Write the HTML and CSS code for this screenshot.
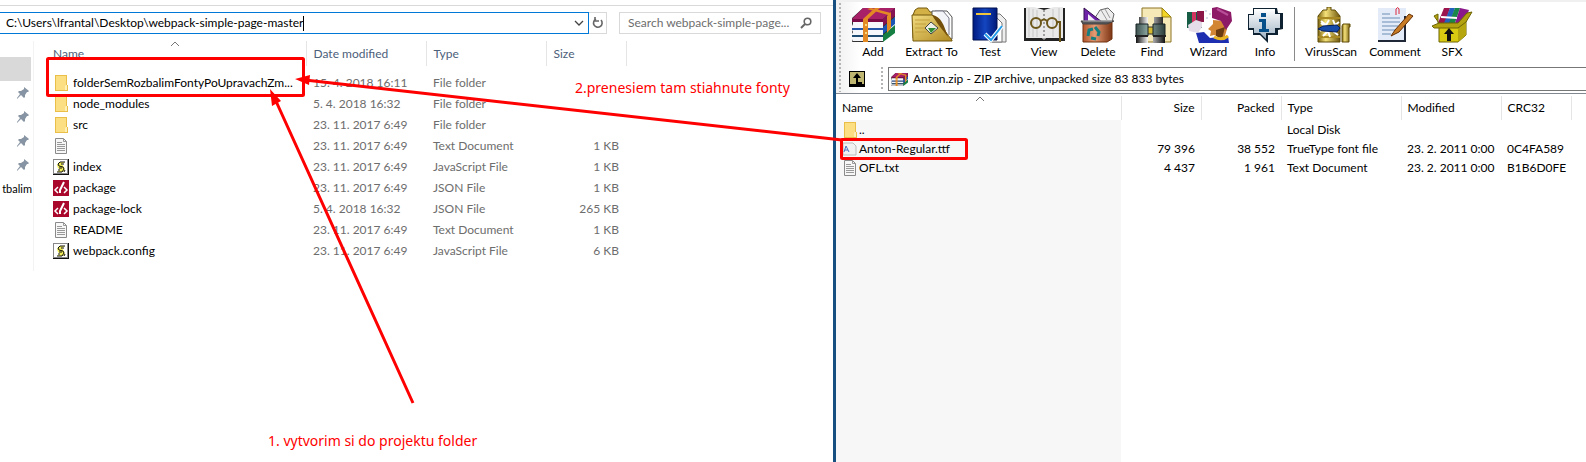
FILE: index.html
```html
<!DOCTYPE html>
<html lang="en">
<head>
<meta charset="utf-8">
<title>webpack-simple-page-master</title>
<link rel="stylesheet" href="styles.css">
</head>
<body>
<svg class="defs" aria-hidden="true">
  <defs>
    <linearGradient id="gold" x1="0" x2="1"><stop offset="0" stop-color="#7a6310"/><stop offset=".35" stop-color="#f6e27a"/><stop offset="1" stop-color="#6d560c"/></linearGradient>
    <linearGradient id="goldflat" x1="0" x2="1" y2="1"><stop offset="0" stop-color="#f3dc80"/><stop offset="1" stop-color="#b08a22"/></linearGradient>
    <linearGradient id="navy" x1="0" x2="1"><stop offset="0" stop-color="#001a80"/><stop offset=".5" stop-color="#1445c0"/><stop offset="1" stop-color="#001a78"/></linearGradient>
    <linearGradient id="steel" x1="0" x2="1"><stop offset="0" stop-color="#111"/><stop offset=".4" stop-color="#eee"/><stop offset="1" stop-color="#111"/></linearGradient>
    <linearGradient id="barrel" x1="0" x2="1"><stop offset="0" stop-color="#3d524f"/><stop offset=".4" stop-color="#8ba59f"/><stop offset="1" stop-color="#2c3d3b"/></linearGradient>
    <linearGradient id="copper" x1="0" x2="1"><stop offset="0" stop-color="#b0562c"/><stop offset=".4" stop-color="#e59a72"/><stop offset="1" stop-color="#7c3514"/></linearGradient>
    <linearGradient id="silver" x1="0" x2="0" y2="1"><stop offset="0" stop-color="#fff"/><stop offset="1" stop-color="#9fb3c4"/></linearGradient>
  </defs>
  <symbol id="i-folder" viewBox="0 0 16 16"><path d="M2 0h12v10h1v6H2z" fill="#e9bf4a"/><path d="M3 1h10v14H3z" fill="#fddf83"/><path d="M13 10h1v5h-2v-4z" fill="#fff0b8"/></symbol>
  <symbol id="i-text" viewBox="0 0 16 16"><path d="M2.500.5h8l3 3v12h-11z" fill="#f7f7f7" stroke="#8a8a8a"/><path d="M10.500.5v3h3M4 4.500h5M4 6.500h8M4 8.500h8M4 10.500h8M4 12.500h8" fill="none" stroke="#999"/></symbol>
  <symbol id="i-js" viewBox="0 0 16 16"><path d="M0 0h16v16H0z" fill="#111"/><path d="M0 0h15v15H0z" fill="#888"/><path d="M1 1h13v13H1z" fill="#fff"/><path d="M6 3h6l-3 2 2 3 1 3-2 2H4l3-2-2-2-1-3z" fill="#f0ec58"/><path d="M12 3H7L5 5l1 2 4 1 1 2-2 3H4M8 5h3M6 9h3M5 11h2M12 11l-1 2" fill="none" stroke="#111"/></symbol>
  <symbol id="i-json" viewBox="0 0 16 16"><path d="M0 0h16v16H0z" fill="#a9082c"/><path d="M5 7l-3 3 3 3M11 7l3 3-3 3" fill="none" stroke="#fff" stroke-width="1.500"/><path d="M11 2L7 10l0 3" fill="none" stroke="#fff" stroke-width="2"/></symbol>
  <symbol id="i-pin" viewBox="0 0 12 12"><path d="M7 0l5 4-1 1-1 0-2 3 0 2-1 1-3-3-4 4 0-1 3-4-2-2 1-1 2 0 3-2z" fill="#8794a3"/></symbol>
  <symbol id="i-books" viewBox="0 0 44 36"><path d="M1 11L12 1h32v9L32 35H1l2-6-2-4 2-4-2-4z" fill="#333"/><path d="M12 1h32L32 12H1z" fill="#a82067"/><path d="M1 12h31v3H1z" fill="#7c0c48"/><path d="M2 15h30v6H2zM2 23h30v5H2zM2 30h30v4H2z" fill="#f5f7fb"/><path d="M1 21h31v2H1z" fill="#2355a8"/><path d="M1 28h31v2H1z" fill="#1c4a70"/><path d="M32 12L44 1v8L32 19z" fill="#861354"/><path d="M32 20l12-10v7L32 27z" fill="#1b55b5"/><path d="M32 28l12-10v8L32 35z" fill="#168044"/><path d="M12 12h5v23h-5zM12 12L24 1h5L17 12zM36 9l4-4v16l-4 5zM16 2l4-1 20 5-3 2z" fill="#e48a24"/><circle cx="15" cy="18" r="1" fill="#fff29a"/><circle cx="15" cy="26" r="1" fill="#fff29a"/></symbol>
</svg>

<div class="desktop">
  <main class="explorer">
    <div class="locationbar">
      <div class="address">
        <input class="address-input" type="text" aria-label="Address" value="C:\Users\lfrantal\Desktop\webpack-simple-page-master">
        <i class="cursor"></i>
        <button class="history" aria-label="Previous locations"><svg width="12" height="12"><path d="M2 4l4 4 4-4" fill="none" stroke="#444" stroke-width="1.300"/></svg></button>
      </div>
      <button class="refresh" aria-label="Refresh"><svg width="12" height="14"><path d="M4 3a4.300 4.300 0 1 0 5 1M3 1v4h4" fill="none" stroke="#666" stroke-width="1.600"/></svg></button>
      <label class="search"><input type="text" aria-label="Search" placeholder="Search webpack-simple-page..."><svg width="12" height="12"><circle cx="7.500" cy="4.500" r="3.300" fill="none" stroke="#666" stroke-width="1.600"/><path d="M5 7L1 11" stroke="#666" stroke-width="2"/></svg></label>
    </div>
    <div class="explorer-body">
      <nav class="sidebar" aria-label="Quick access">
        <div class="selected"></div>
        <div class="pin"><svg><use href="#i-pin"/></svg></div>
        <div class="pin"><svg><use href="#i-pin"/></svg></div>
        <div class="pin"><svg><use href="#i-pin"/></svg></div>
        <div class="pin"><svg><use href="#i-pin"/></svg></div>
        <div class="pin">tbalim</div>
      </nav>
      <table class="files">
        <colgroup><col class="c-name"><col class="c-mid"><col class="c-mid"><col class="c-size"><col></colgroup>
        <thead><tr><th><svg class="sort" width="10" height="6"><path d="M1 5l4-4 4 4" fill="none" stroke="#777"/></svg>Name</th><th>Date modified</th><th>Type</th><th>Size</th><th></th></tr></thead>
        <tbody>
          <tr><td><span class="file"><svg><use href="#i-folder"/></svg>folderSemRozbalimFontyPoUpravachZm...</span></td><td>15. 4. 2018 16:11</td><td>File folder</td><td></td></tr>
          <tr><td><span class="file"><svg><use href="#i-folder"/></svg>node_modules</span></td><td>5. 4. 2018 16:32</td><td>File folder</td><td></td></tr>
          <tr><td><span class="file"><svg><use href="#i-folder"/></svg>src</span></td><td>23. 11. 2017 6:49</td><td>File folder</td><td></td></tr>
          <tr><td><span class="file"><svg><use href="#i-text"/></svg></span></td><td>23. 11. 2017 6:49</td><td>Text Document</td><td>1 KB</td></tr>
          <tr><td><span class="file"><svg><use href="#i-js"/></svg>index</span></td><td>23. 11. 2017 6:49</td><td>JavaScript File</td><td>1 KB</td></tr>
          <tr><td><span class="file"><svg><use href="#i-json"/></svg>package</span></td><td>23. 11. 2017 6:49</td><td>JSON File</td><td>1 KB</td></tr>
          <tr><td><span class="file"><svg><use href="#i-json"/></svg>package-lock</span></td><td>5. 4. 2018 16:32</td><td>JSON File</td><td>265 KB</td></tr>
          <tr><td><span class="file"><svg><use href="#i-text"/></svg>README</span></td><td>23. 11. 2017 6:49</td><td>Text Document</td><td>1 KB</td></tr>
          <tr><td><span class="file"><svg><use href="#i-js"/></svg>webpack.config</span></td><td>23. 11. 2017 6:49</td><td>JavaScript File</td><td>6 KB</td></tr>
        </tbody>
      </table>
    </div>
  </main>

  <section class="archive" aria-label="Archive">
    <div class="bars">
      <i class="grip"></i>
      <div class="bars-main">
        <div class="toolbar">
          <button><svg viewBox="0 0 44 36"><use href="#i-books"/></svg>Add</button>
          <button class="wide"><svg viewBox="0 0 44 36"><path d="M3 8l2-5 3-2h9l3 4h4v26H3z" fill="#d3b146" stroke="#75590c"/><path d="M22 4h15l5 6v22H22z" fill="#fff" stroke="#555"/><path d="M25 4h8l6 7v17" fill="#f2f4f7" stroke="#778"/><path d="M2 8h20c8 4 10 14 20 25v1H3z" fill="url(#goldflat)" stroke="#75590c"/><path d="M22 8c9 1 12 10 16 22C32 22 28 18 22 8z" fill="#75500c"/><path d="M5 13h15M5 17h11M5 21h10M5 25h12" stroke="#c2a03e"/><path d="M15 21l6-6 7 6-7 6z" fill="#eef0e6" stroke="#444"/><path d="M18 21h8l-5 5z" fill="#2c8a32"/></svg>Extract To</button>
          <button><svg viewBox="0 0 44 36"><path d="M23 7h9l6 6v22H23z" fill="#eee" stroke="#777"/><path d="M22 11h7l5 5v19H22z" fill="#fff" stroke="#777"/><path d="M5 1h24v32H5z" fill="url(#navy)" stroke="#001050"/><path d="M8 6h15v2H8z" fill="#f1c53b"/><path d="M17 27l6 6L34 19" fill="none" stroke="#fff" stroke-width="4"/><path d="M17 27l6 6L34 19" fill="none" stroke="#229bea" stroke-width="2"/></svg>Test</button>
          <button><svg viewBox="0 0 44 36"><path d="M2 1h41v33H2z" fill="#222"/><path d="M4 0h8l10 3L32 0h9v31H24l-2 2-2-2H4z" fill="#e9e9e9"/><path d="M7 1v29M11 2v28M15 3v27M31 2v28M37 1v29" stroke="#c7c7c7"/><path d="M22 3v30" stroke="#555" stroke-dasharray="2 2"/><g fill="none" stroke="#6b5518" stroke-width="2"><circle cx="14" cy="16" r="5"/><circle cx="30" cy="16" r="5"/><path d="M19 14q3-3 6 0M35 15h3v20"/></g></svg>View</button>
          <button><svg viewBox="0 0 44 36"><path d="M17 14l7-11 8-2 6 6-2 8z" fill="#eee" stroke="#666"/><path d="M25 3l6 10M29 2l5 9" stroke="#999"/><path d="M8 15V1l18 14z" fill="#6e22a8" stroke="#341050"/><path d="M12 7v7h8z" fill="#f3edf8"/><path d="M7 15h29v17l-5 3H7z" fill="url(#copper)" stroke="#71300f"/><path d="M5 14h33l-7 3H7z" fill="#54565a" stroke="#444"/><path d="M7 14h29" stroke="#bbb"/><g fill="none" stroke="#157f80" stroke-width="3"><path d="M12 29l1-6 4-1M19 20l4 5-1 4M20 32l-5-1"/></g></svg>Delete</button>
          <button><svg viewBox="0 0 44 36"><path d="M12 1h20l9 9v25H12z" fill="#f6e9b8" stroke="#8d7526"/><path d="M32 1v9h9z" fill="#f3d527" stroke="#9b8210"/><path d="M9 10h9v9H9zM24 10h9v9h-9zM6 28h12v8H6zM23 28h12v8H23z" fill="url(#steel)"/><path d="M17 20h7v7h-7z" fill="#d4b931" stroke="#333"/><path d="M6 17h12v12H6zM23 17h12v12H23z" fill="url(#barrel)" stroke="#192525"/><path d="M5 29h13M23 29h13" stroke="#222" stroke-width="2"/></svg>Find</button>
          <button class="wiz"><svg viewBox="0 0 48 36"><path d="M2 5h15v16H2z" fill="#175c45"/><path d="M7 5h4v16H7z" fill="#d23460"/><path d="M12 4h7v11h-7z" fill="#8a1748"/><path d="M3 18l8-5 6 2v5l-4 6-9-2z" fill="#e4dce8"/><path d="M11 26l8-1 6 6 18-2 1 7H14z" fill="#1d2fb0"/><path d="M28 13l10 1 4 8-3 10-10-4-4 1 1-5-3-2 5-5z" fill="#d28532"/><path d="M31 23l9-3-3 12-6-3z" fill="#6b3c10"/><path d="M27 1l5-1 14 5 1 9-6 9-5-9-9-3z" fill="#8c1a67"/><path d="M32 2l11 6" stroke="#b84d98" stroke-width="2"/><path d="M29 30q8 4 14-1" fill="none" stroke="#e9b621" stroke-width="3"/><path d="M20 4h2M24 7h2M21 11h2" stroke="#abc"/></svg>Wizard</button>
          <button><svg viewBox="0 0 44 36"><path d="M10 1h24l1 5h5v16l-5 1v5H25v8l-8-8H10v-5H5V7h5z" fill="#0e2231"/><path d="M11 2h21v5h5v14h-5v5h-9v6l-6-6h-6v-5H6V8h5z" fill="url(#silver)"/><path d="M18 6h5v4h-5zM16 12h7v10h3v3H16v-3h3v-7h-3z" fill="#07508a"/></svg>Info</button>
          <i class="separator"></i>
          <button class="virus"><svg viewBox="0 0 44 36"><path d="M14 3h4V0h4v3h4l5 6v26H9V9z" fill="url(#gold)" stroke="#604d09"/><path d="M34 17h7v3h-1v15h-7V19z" fill="url(#gold)" stroke="#604d09"/><path d="M9 10h22v2H9zM9 29h22v2H9z" fill="#a98921"/><path d="M12 16l5 4-6 4M20 13l-3 5-5-4M24 13l2 5 4-3M14 29l5-5 2 6M29 28l-5-4" fill="none" stroke="#fff" stroke-width="2"/><path d="M9 22l5-3 14-1 3 3-3 4-14-1z" fill="#164aa8" stroke="#051d59"/></svg>VirusScan</button>
          <button class="comment"><svg viewBox="0 0 44 36"><path d="M5 1h28v34H5z" fill="#e2ebf7"/><path d="M5 34h27V9" fill="none" stroke="#202838" stroke-width="2"/><path d="M9 7h8M9 11h18M9 15h18M9 19h16M9 23h13M9 27h9" stroke="#6d8eb5"/><path d="M23 8V2q2-3 3 0v5" fill="none" stroke="#dc2940"/><path d="M18 29l4-6L36 7l4 2-14 16z" fill="#c77c25" stroke="#653006"/></svg>Comment</button>
          <button><svg viewBox="0 0 44 36"><path d="M8 16l6-15 6 0-5 15z" fill="#9b144d"/><path d="M14 16l6-15h5l-5 15z" fill="#2361be"/><path d="M19 16l6-15h5l-5 15z" fill="#19864a"/><path d="M25 16l5-15 9 2-5 13z" fill="#8b188b"/><path d="M11 10l16 1" stroke="#fff" stroke-width="2"/><path d="M9 18h19l8-7v17l-8 7H9z" fill="#d9cb12" stroke="#6c6300"/><path d="M28 18l8-7v17l-8 7z" fill="#b5a60f"/><path d="M9 16L4 9 8 7v9h20l9-10 5-1-6 10-8 6H4l-2-2z" fill="#b2a210" stroke="#6e6405"/><path d="M17 34V27h-3l5-6 5 6h-3v7z" fill="#111"/></svg>SFX</button>
        </div>
        <div class="pathrow">
          <button aria-label="Up one level"><svg width="16" height="16"><path d="M0 0h16v16H0z" fill="#000"/><path d="M1 1h14v12H1z" fill="#bfb672"/><path d="M7 13V7H4l4-5 4 5H9v4h4v2z" fill="#000"/></svg></button>
          <i class="grip"></i>
          <label class="pathbox"><svg><use href="#i-books"/></svg><input type="text" aria-label="Archive path" value="Anton.zip - ZIP archive, unpacked size 83 833 bytes"></label>
        </div>
      </div>
    </div>
    <div class="listing">
      <table class="entries">
        <colgroup><col class="e-name"><col class="e-num"><col class="e-num"><col class="e-type"><col class="e-date"><col class="e-crc"><col></colgroup>
        <thead><tr><th><svg class="sort" width="10" height="6"><path d="M1 5l4-4 4 4" fill="none" stroke="#777"/></svg>Name</th><th>Size</th><th>Packed</th><th>Type</th><th>Modified</th><th>CRC32</th><th></th></tr></thead>
        <tbody>
          <tr><td><span class="file"><svg><use href="#i-folder"/></svg>..</span></td><td></td><td></td><td>Local Disk</td><td></td><td></td></tr>
          <tr><td><span class="file"><svg viewBox="0 0 16 16"><path d="M1 2h10l3 3v9H1z" fill="#f1f1f1" stroke="#bbb"/><path d="M2 11l2-6 3 6M3 9h3" fill="none" stroke="#4a70c0"/></svg>Anton-Regular.ttf</span></td><td>79 396</td><td>38 552</td><td>TrueType font file</td><td>23. 2. 2011 0:00</td><td>0C4FA589</td></tr>
          <tr><td><span class="file"><svg><use href="#i-text"/></svg>OFL.txt</span></td><td>4 437</td><td>1 961</td><td>Text Document</td><td>23. 2. 2011 0:00</td><td>B1B6D0FE</td></tr>
        </tbody>
      </table>
      <div class="filler"></div>
    </div>
  </section>

  <svg class="marks" aria-hidden="true">
    <g fill="none" stroke="#f00" stroke-width="3">
      <rect x="47.500" y="58.500" width="256" height="37" rx="1"/>
      <rect x="841.500" y="139.500" width="125" height="19" rx="1"/>
      <path d="M842 140L305 80M413 403L275 99"/>
    </g>
    <path d="M295 79l15-4-1 10zM270 89l11 12-9 5z" fill="#f00"/>
  </svg>
  <p class="note note-one">1. vytvorim si do projektu folder</p>
  <p class="note note-two">2.prenesiem tam stiahnute fonty</p>
</div>
</body>
</html>
```
FILE: styles.css
```css
* { box-sizing: border-box; }
html, body { height: 100%; }
body {
  margin: 0;
  background: #fff;
  color: #000;
  font: 12px/16px Lato, "Open Sans", sans-serif;
}
button, input { font: inherit; color: inherit; }
button { border: 0; padding: 0; background: none; }
input { border: 0; outline: 0; padding: 0; background: none; min-width: 0; flex: 1; }
table { border-collapse: collapse; table-layout: fixed; width: 100%; }
th { font-weight: 400; text-align: left; }
th, td { padding: 0; white-space: nowrap; }
svg { display: block; flex: none; }
.defs { position: absolute; width: 0; height: 0; }

.desktop { position: relative; display: flex; min-height: 100%; overflow: hidden; }

/* File explorer */
.explorer {
  flex: 0 0 836px;
  padding-top: 5px;
  border-right: 3px solid #174f80;
}
.locationbar {
  display: flex;
  height: 36px;
  padding: 6px 12px 7px 0;
  border-top: 1px solid #d9d9d9;
}
.address {
  display: flex;
  flex: 1;
  align-items: center;
  padding: 0 3px 0 6px;
  border: 1px solid #0078d7;
  border-left: 0;
}
.address-input { flex: none; field-sizing: content; }
.cursor { width: 1px; height: 15px; background: #000; }
.history { margin-left: auto; }
.refresh {
  display: flex;
  align-items: center;
  justify-content: center;
  width: 18px;
  border: 1px solid #d9d9d9;
  border-left: 0;
}
.search {
  display: flex;
  align-items: center;
  width: 202px;
  margin-left: 12px;
  padding: 0 8px;
  border: 1px solid #d9d9d9;
}
.search input::placeholder { color: #6d6d6d; opacity: 1; }
.explorer-body { display: flex; align-items: flex-start; }
.sidebar { width: 34px; min-height: 230px; padding-top: 16px; border-right: 1px solid #f3f3f3; font-size: 11px; }
.selected { height: 24px; margin-right: 2px; background: #d9d9d9; }
.pin { display: flex; align-items: center; justify-content: flex-end; height: 24px; padding-right: 1px; }
.pin svg { width: 12px; height: 12px; margin-right: 3px; }

.files { flex: 1; width: 0; color: #6d6d6d; }
.c-name { width: 272px; }
.c-mid { width: 120px; }
.c-size { width: 80px; }
.files th { position: relative; height: 25px; padding-left: 7px; border-right: 1px solid #e5e5e5; color: #4c607a; }
.files th:first-child { padding-left: 19px; }
.files th:last-child { border: 0; }
.files td { height: 21px; padding-left: 7px; }
.files td:first-child { padding-left: 19px; color: #000; }
.files td:nth-child(4) { padding-right: 7px; text-align: right; }
.files tbody tr:first-child td { height: 27px; padding-top: 6px; }
.file { display: flex; align-items: center; gap: 4px; }
.file svg { width: 16px; height: 16px; }
.sort { position: absolute; left: 50%; top: 0; }

/* Archive window */
.archive { display: flex; flex: 1; flex-direction: column; min-width: 0; border-top: 2px solid #f0f0f0; }
.bars {
  display: flex;
  height: 92px;
  padding: 1px 0 1px 3px;
  border-bottom: 1px solid #828790;
  background: linear-gradient(90deg, #f0f0f0, #fff 24px);
}
.grip {
  width: 2px;
  background: repeating-linear-gradient(#b4b4b4 0 2px, transparent 2px 4px);
}
.bars-main { display: flex; flex: 1; flex-direction: column; min-width: 0; }
.toolbar { display: flex; height: 64px; padding: 4px 0 0 5px; }
.toolbar button { display: flex; flex-direction: column; align-items: center; width: 54px; white-space: nowrap; }
.toolbar svg { width: 44px; height: 36px; margin-bottom: 1px; }
.toolbar .wide { width: 63px; }
.toolbar .comment { width: 60px; }
.toolbar .wiz { width: 59px; }
.toolbar .wiz svg { width: 48px; }
.toolbar .virus { width: 68px; }
.separator { width: 1px; height: 54px; margin: 0 2px 0 2px; background: #8a8a8a; }
.pathrow { display: flex; height: 24px; padding-left: 8px; align-items: center; }
.pathrow .grip { height: 24px; margin: 0 5px 0 16px; }
.pathbox {
  display: flex;
  flex: 1;
  align-items: center;
  gap: 5px;
  height: 24px;
  padding-left: 2px;
  border: 1px solid #777;
  border-right: 0;
}
.pathbox svg { width: 17px; height: 17px; }
.listing { display: flex; flex: 1; flex-direction: column; padding-top: 2px; }
.e-name { width: 285px; }
.e-num { width: 80px; }
.e-type { width: 120px; }
.e-date { width: 100px; }
.e-crc { width: 70px; }
.entries th { position: relative; height: 24px; padding: 0 6px; border-right: 1px solid #e5e5e5; }
.entries th:last-child { border: 0; }
.entries th:nth-child(2), .entries th:nth-child(3),
.entries td:nth-child(2), .entries td:nth-child(3) { text-align: right; }
.entries td { height: 19px; padding: 0 6px; }
.entries td:first-child { background: #f7f7f7; }
.entries .file { gap: 1px; }
.entries .sort { margin-left: -3px; }
.filler { flex: 1; width: 285px; background: #f7f7f7; }

/* Markup drawn over both windows */
.marks { position: absolute; left: 0; top: 0; width: 100%; height: 100%; pointer-events: none; }
.note { position: absolute; margin: 0; color: #f00; font: 14px/18px "Noto Sans", sans-serif; white-space: nowrap; }
.note-one { left: 268px; top: 432px; }
.note-two { left: 575px; top: 79px; }
```
